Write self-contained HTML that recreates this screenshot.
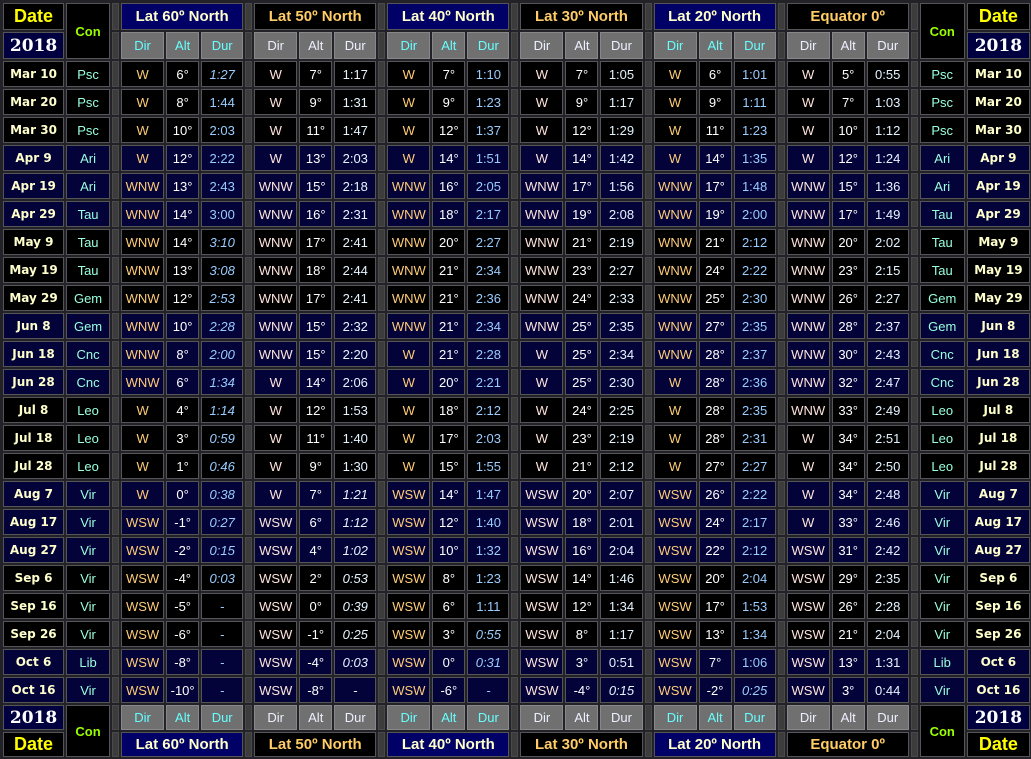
<!DOCTYPE html>
<html><head><meta charset="utf-8"><style>
html,body{margin:0;padding:0;background:#222228;width:1031px;height:757px;overflow:hidden}
table{position:absolute;left:1px;top:1px;border-collapse:separate;border-spacing:2px;table-layout:fixed;width:1031px}
td{box-sizing:border-box;border:1px solid #555;padding:0;text-align:center;font:13px "Liberation Sans",sans-serif;color:#fff;white-space:nowrap;overflow:hidden}
tr.h1 td{height:27px}tr.h2 td{height:27px}
tr.r td{height:26px}tr.f1 td{height:25px}tr.f2 td{height:25px}
tr.k td{background:#000}tr.n td{background:#03033a}
td.s{background:#3c3c3c!important;border-color:#4a4a4a}
td.dt{font:bold 18px "Liberation Sans",sans-serif;color:#ffff00;background:#000}
td.yr{font:bold 17px "DejaVu Serif","Liberation Serif",serif;color:#fff;background:#000040}
td.con{font:bold 13px "Liberation Sans",sans-serif;color:#99ff00;background:#000}
td.ln{background:#000066;color:#ffffcc;font:bold 15px "Liberation Sans",sans-serif}
td.lk{background:#000;color:#ffcc66;font:bold 15px "Liberation Sans",sans-serif}
td.ga{background:#707070;color:#66ffff;border-color:#888}
td.gb{background:#707070;color:#eef0ff;border-color:#888}
tr.r td:nth-child(8n+4){color:#ffcc77}
tr.r td:nth-child(8n+6){color:#99ccff}
tr.r td:nth-child(8n){color:#ffe4dc}
tr.r td:nth-child(8n+10){color:#e4f4ff}
tr.r td:nth-child(4n+3){background:#3c3c3c;border-color:#4a4a4a}
tr.r td:nth-child(1),tr.r td:nth-child(29){font:bold 12px "DejaVu Sans",sans-serif;color:#ffffcc}
tr.r td:nth-child(2),tr.r td:nth-child(28){color:#99ffdd}
i{font-style:italic}
</style></head><body>
<table>
<colgroup><col style="width:61px"><col style="width:44px"><col style="width:7px">
<col style="width:43px"><col style="width:33px"><col style="width:42px"><col style="width:7px">
<col style="width:43px"><col style="width:33px"><col style="width:42px"><col style="width:7px">
<col style="width:43px"><col style="width:33px"><col style="width:42px"><col style="width:7px">
<col style="width:43px"><col style="width:33px"><col style="width:42px"><col style="width:7px">
<col style="width:43px"><col style="width:33px"><col style="width:42px"><col style="width:7px">
<col style="width:43px"><col style="width:33px"><col style="width:42px"><col style="width:7px">
<col style="width:45px"><col style="width:63px"></colgroup>
<tr class="h1"><td class="dt">Date</td><td class="con" rowspan="2">Con</td><td class="s"></td><td class="ln" colspan="3">Lat 60º North</td><td class="s"></td><td class="lk" colspan="3">Lat 50º North</td><td class="s"></td><td class="ln" colspan="3">Lat 40º North</td><td class="s"></td><td class="lk" colspan="3">Lat 30º North</td><td class="s"></td><td class="ln" colspan="3">Lat 20º North</td><td class="s"></td><td class="lk" colspan="3">Equator 0º</td><td class="s"></td><td class="con" rowspan="2">Con</td><td class="dt">Date</td></tr>
<tr class="h2"><td class="yr">2018</td><td class="s"></td><td class="ga">Dir</td><td class="ga">Alt</td><td class="ga">Dur</td><td class="s"></td><td class="gb">Dir</td><td class="gb">Alt</td><td class="gb">Dur</td><td class="s"></td><td class="ga">Dir</td><td class="ga">Alt</td><td class="ga">Dur</td><td class="s"></td><td class="gb">Dir</td><td class="gb">Alt</td><td class="gb">Dur</td><td class="s"></td><td class="ga">Dir</td><td class="ga">Alt</td><td class="ga">Dur</td><td class="s"></td><td class="gb">Dir</td><td class="gb">Alt</td><td class="gb">Dur</td><td class="s"></td><td class="yr">2018</td></tr>
<tr class="r k"><td>Mar 10</td><td>Psc</td><td></td><td>W</td><td>6°</td><td><i>1:27</i></td><td></td><td>W</td><td>7°</td><td>1:17</td><td></td><td>W</td><td>7°</td><td>1:10</td><td></td><td>W</td><td>7°</td><td>1:05</td><td></td><td>W</td><td>6°</td><td>1:01</td><td></td><td>W</td><td>5°</td><td>0:55</td><td></td><td>Psc</td><td>Mar 10</td></tr>
<tr class="r k"><td>Mar 20</td><td>Psc</td><td></td><td>W</td><td>8°</td><td>1:44</td><td></td><td>W</td><td>9°</td><td>1:31</td><td></td><td>W</td><td>9°</td><td>1:23</td><td></td><td>W</td><td>9°</td><td>1:17</td><td></td><td>W</td><td>9°</td><td>1:11</td><td></td><td>W</td><td>7°</td><td>1:03</td><td></td><td>Psc</td><td>Mar 20</td></tr>
<tr class="r k"><td>Mar 30</td><td>Psc</td><td></td><td>W</td><td>10°</td><td>2:03</td><td></td><td>W</td><td>11°</td><td>1:47</td><td></td><td>W</td><td>12°</td><td>1:37</td><td></td><td>W</td><td>12°</td><td>1:29</td><td></td><td>W</td><td>11°</td><td>1:23</td><td></td><td>W</td><td>10°</td><td>1:12</td><td></td><td>Psc</td><td>Mar 30</td></tr>
<tr class="r n"><td>Apr 9</td><td>Ari</td><td></td><td>W</td><td>12°</td><td>2:22</td><td></td><td>W</td><td>13°</td><td>2:03</td><td></td><td>W</td><td>14°</td><td>1:51</td><td></td><td>W</td><td>14°</td><td>1:42</td><td></td><td>W</td><td>14°</td><td>1:35</td><td></td><td>W</td><td>12°</td><td>1:24</td><td></td><td>Ari</td><td>Apr 9</td></tr>
<tr class="r n"><td>Apr 19</td><td>Ari</td><td></td><td>WNW</td><td>13°</td><td>2:43</td><td></td><td>WNW</td><td>15°</td><td>2:18</td><td></td><td>WNW</td><td>16°</td><td>2:05</td><td></td><td>WNW</td><td>17°</td><td>1:56</td><td></td><td>WNW</td><td>17°</td><td>1:48</td><td></td><td>WNW</td><td>15°</td><td>1:36</td><td></td><td>Ari</td><td>Apr 19</td></tr>
<tr class="r n"><td>Apr 29</td><td>Tau</td><td></td><td>WNW</td><td>14°</td><td>3:00</td><td></td><td>WNW</td><td>16°</td><td>2:31</td><td></td><td>WNW</td><td>18°</td><td>2:17</td><td></td><td>WNW</td><td>19°</td><td>2:08</td><td></td><td>WNW</td><td>19°</td><td>2:00</td><td></td><td>WNW</td><td>17°</td><td>1:49</td><td></td><td>Tau</td><td>Apr 29</td></tr>
<tr class="r k"><td>May 9</td><td>Tau</td><td></td><td>WNW</td><td>14°</td><td><i>3:10</i></td><td></td><td>WNW</td><td>17°</td><td>2:41</td><td></td><td>WNW</td><td>20°</td><td>2:27</td><td></td><td>WNW</td><td>21°</td><td>2:19</td><td></td><td>WNW</td><td>21°</td><td>2:12</td><td></td><td>WNW</td><td>20°</td><td>2:02</td><td></td><td>Tau</td><td>May 9</td></tr>
<tr class="r k"><td>May 19</td><td>Tau</td><td></td><td>WNW</td><td>13°</td><td><i>3:08</i></td><td></td><td>WNW</td><td>18°</td><td>2:44</td><td></td><td>WNW</td><td>21°</td><td>2:34</td><td></td><td>WNW</td><td>23°</td><td>2:27</td><td></td><td>WNW</td><td>24°</td><td>2:22</td><td></td><td>WNW</td><td>23°</td><td>2:15</td><td></td><td>Tau</td><td>May 19</td></tr>
<tr class="r k"><td>May 29</td><td>Gem</td><td></td><td>WNW</td><td>12°</td><td><i>2:53</i></td><td></td><td>WNW</td><td>17°</td><td>2:41</td><td></td><td>WNW</td><td>21°</td><td>2:36</td><td></td><td>WNW</td><td>24°</td><td>2:33</td><td></td><td>WNW</td><td>25°</td><td>2:30</td><td></td><td>WNW</td><td>26°</td><td>2:27</td><td></td><td>Gem</td><td>May 29</td></tr>
<tr class="r n"><td>Jun 8</td><td>Gem</td><td></td><td>WNW</td><td>10°</td><td><i>2:28</i></td><td></td><td>WNW</td><td>15°</td><td>2:32</td><td></td><td>WNW</td><td>21°</td><td>2:34</td><td></td><td>WNW</td><td>25°</td><td>2:35</td><td></td><td>WNW</td><td>27°</td><td>2:35</td><td></td><td>WNW</td><td>28°</td><td>2:37</td><td></td><td>Gem</td><td>Jun 8</td></tr>
<tr class="r n"><td>Jun 18</td><td>Cnc</td><td></td><td>WNW</td><td>8°</td><td><i>2:00</i></td><td></td><td>WNW</td><td>15°</td><td>2:20</td><td></td><td>W</td><td>21°</td><td>2:28</td><td></td><td>W</td><td>25°</td><td>2:34</td><td></td><td>WNW</td><td>28°</td><td>2:37</td><td></td><td>WNW</td><td>30°</td><td>2:43</td><td></td><td>Cnc</td><td>Jun 18</td></tr>
<tr class="r n"><td>Jun 28</td><td>Cnc</td><td></td><td>WNW</td><td>6°</td><td><i>1:34</i></td><td></td><td>W</td><td>14°</td><td>2:06</td><td></td><td>W</td><td>20°</td><td>2:21</td><td></td><td>W</td><td>25°</td><td>2:30</td><td></td><td>W</td><td>28°</td><td>2:36</td><td></td><td>WNW</td><td>32°</td><td>2:47</td><td></td><td>Cnc</td><td>Jun 28</td></tr>
<tr class="r k"><td>Jul 8</td><td>Leo</td><td></td><td>W</td><td>4°</td><td><i>1:14</i></td><td></td><td>W</td><td>12°</td><td>1:53</td><td></td><td>W</td><td>18°</td><td>2:12</td><td></td><td>W</td><td>24°</td><td>2:25</td><td></td><td>W</td><td>28°</td><td>2:35</td><td></td><td>WNW</td><td>33°</td><td>2:49</td><td></td><td>Leo</td><td>Jul 8</td></tr>
<tr class="r k"><td>Jul 18</td><td>Leo</td><td></td><td>W</td><td>3°</td><td><i>0:59</i></td><td></td><td>W</td><td>11°</td><td>1:40</td><td></td><td>W</td><td>17°</td><td>2:03</td><td></td><td>W</td><td>23°</td><td>2:19</td><td></td><td>W</td><td>28°</td><td>2:31</td><td></td><td>W</td><td>34°</td><td>2:51</td><td></td><td>Leo</td><td>Jul 18</td></tr>
<tr class="r k"><td>Jul 28</td><td>Leo</td><td></td><td>W</td><td>1°</td><td><i>0:46</i></td><td></td><td>W</td><td>9°</td><td>1:30</td><td></td><td>W</td><td>15°</td><td>1:55</td><td></td><td>W</td><td>21°</td><td>2:12</td><td></td><td>W</td><td>27°</td><td>2:27</td><td></td><td>W</td><td>34°</td><td>2:50</td><td></td><td>Leo</td><td>Jul 28</td></tr>
<tr class="r n"><td>Aug 7</td><td>Vir</td><td></td><td>W</td><td>0°</td><td><i>0:38</i></td><td></td><td>W</td><td>7°</td><td><i>1:21</i></td><td></td><td>WSW</td><td>14°</td><td>1:47</td><td></td><td>WSW</td><td>20°</td><td>2:07</td><td></td><td>WSW</td><td>26°</td><td>2:22</td><td></td><td>W</td><td>34°</td><td>2:48</td><td></td><td>Vir</td><td>Aug 7</td></tr>
<tr class="r n"><td>Aug 17</td><td>Vir</td><td></td><td>WSW</td><td>-1°</td><td><i>0:27</i></td><td></td><td>WSW</td><td>6°</td><td><i>1:12</i></td><td></td><td>WSW</td><td>12°</td><td>1:40</td><td></td><td>WSW</td><td>18°</td><td>2:01</td><td></td><td>WSW</td><td>24°</td><td>2:17</td><td></td><td>W</td><td>33°</td><td>2:46</td><td></td><td>Vir</td><td>Aug 17</td></tr>
<tr class="r n"><td>Aug 27</td><td>Vir</td><td></td><td>WSW</td><td>-2°</td><td><i>0:15</i></td><td></td><td>WSW</td><td>4°</td><td><i>1:02</i></td><td></td><td>WSW</td><td>10°</td><td>1:32</td><td></td><td>WSW</td><td>16°</td><td>2:04</td><td></td><td>WSW</td><td>22°</td><td>2:12</td><td></td><td>WSW</td><td>31°</td><td>2:42</td><td></td><td>Vir</td><td>Aug 27</td></tr>
<tr class="r k"><td>Sep 6</td><td>Vir</td><td></td><td>WSW</td><td>-4°</td><td><i>0:03</i></td><td></td><td>WSW</td><td>2°</td><td><i>0:53</i></td><td></td><td>WSW</td><td>8°</td><td>1:23</td><td></td><td>WSW</td><td>14°</td><td>1:46</td><td></td><td>WSW</td><td>20°</td><td>2:04</td><td></td><td>WSW</td><td>29°</td><td>2:35</td><td></td><td>Vir</td><td>Sep 6</td></tr>
<tr class="r k"><td>Sep 16</td><td>Vir</td><td></td><td>WSW</td><td>-5°</td><td><i>-</i></td><td></td><td>WSW</td><td>0°</td><td><i>0:39</i></td><td></td><td>WSW</td><td>6°</td><td>1:11</td><td></td><td>WSW</td><td>12°</td><td>1:34</td><td></td><td>WSW</td><td>17°</td><td>1:53</td><td></td><td>WSW</td><td>26°</td><td>2:28</td><td></td><td>Vir</td><td>Sep 16</td></tr>
<tr class="r k"><td>Sep 26</td><td>Vir</td><td></td><td>WSW</td><td>-6°</td><td><i>-</i></td><td></td><td>WSW</td><td>-1°</td><td><i>0:25</i></td><td></td><td>WSW</td><td>3°</td><td><i>0:55</i></td><td></td><td>WSW</td><td>8°</td><td>1:17</td><td></td><td>WSW</td><td>13°</td><td>1:34</td><td></td><td>WSW</td><td>21°</td><td>2:04</td><td></td><td>Vir</td><td>Sep 26</td></tr>
<tr class="r n"><td>Oct 6</td><td>Lib</td><td></td><td>WSW</td><td>-8°</td><td><i>-</i></td><td></td><td>WSW</td><td>-4°</td><td><i>0:03</i></td><td></td><td>WSW</td><td>0°</td><td><i>0:31</i></td><td></td><td>WSW</td><td>3°</td><td>0:51</td><td></td><td>WSW</td><td>7°</td><td>1:06</td><td></td><td>WSW</td><td>13°</td><td>1:31</td><td></td><td>Lib</td><td>Oct 6</td></tr>
<tr class="r n"><td>Oct 16</td><td>Vir</td><td></td><td>WSW</td><td>-10°</td><td><i>-</i></td><td></td><td>WSW</td><td>-8°</td><td><i>-</i></td><td></td><td>WSW</td><td>-6°</td><td><i>-</i></td><td></td><td>WSW</td><td>-4°</td><td><i>0:15</i></td><td></td><td>WSW</td><td>-2°</td><td><i>0:25</i></td><td></td><td>WSW</td><td>3°</td><td>0:44</td><td></td><td>Vir</td><td>Oct 16</td></tr>
<tr class="f1"><td class="yr">2018</td><td class="con" rowspan="2">Con</td><td class="s"></td><td class="ga">Dir</td><td class="ga">Alt</td><td class="ga">Dur</td><td class="s"></td><td class="gb">Dir</td><td class="gb">Alt</td><td class="gb">Dur</td><td class="s"></td><td class="ga">Dir</td><td class="ga">Alt</td><td class="ga">Dur</td><td class="s"></td><td class="gb">Dir</td><td class="gb">Alt</td><td class="gb">Dur</td><td class="s"></td><td class="ga">Dir</td><td class="ga">Alt</td><td class="ga">Dur</td><td class="s"></td><td class="gb">Dir</td><td class="gb">Alt</td><td class="gb">Dur</td><td class="s"></td><td class="con" rowspan="2">Con</td><td class="yr">2018</td></tr>
<tr class="f2"><td class="dt">Date</td><td class="s"></td><td class="ln" colspan="3">Lat 60º North</td><td class="s"></td><td class="lk" colspan="3">Lat 50º North</td><td class="s"></td><td class="ln" colspan="3">Lat 40º North</td><td class="s"></td><td class="lk" colspan="3">Lat 30º North</td><td class="s"></td><td class="ln" colspan="3">Lat 20º North</td><td class="s"></td><td class="lk" colspan="3">Equator 0º</td><td class="s"></td><td class="dt">Date</td></tr>
</table>
</body></html>
